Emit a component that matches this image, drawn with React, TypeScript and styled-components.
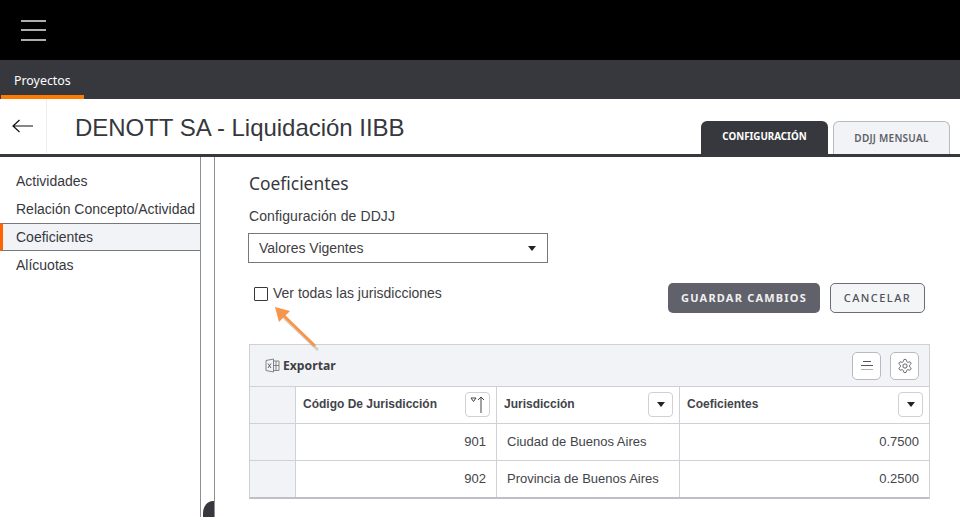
import React from "react";
import styled, { createGlobalStyle } from "styled-components";

const Global = createGlobalStyle`
  html, body { margin: 0; padding: 0; background: #fff; }
  body { font-family: "Liberation Sans", Arial, sans-serif; color: #36383d; }
  * { box-sizing: border-box; }
`;
const Page = styled.div`
  position: relative; width: 960px; height: 517px; overflow: hidden; display: flex; flex-direction: column;
`;
const TopBar = styled.header`
  height: 60px; background: #000; display: flex; align-items: center; padding-left: 21px; flex: none;
`;
const Burger = styled.button`
  width: 25px; height: 21px; padding: 0; border: 0; background: transparent; display: flex; flex-direction: column; justify-content: space-between;
  span { display: block; height: 2px; background: #aeaeae; }
`;
const Nav = styled.nav`
  height: 39px; background: #36383d; display: flex; padding-left: 1px; flex: none;
`;
const NavTab = styled.div`
  width: 83px; padding: 13px 0 0 13px; border-bottom: 4px solid #ff7a00; color: #fff; font: 12.4px/16px "Noto Sans", sans-serif;
`;
const TitleBar = styled.div`
  height: 58px; flex: none; display: flex; align-items: stretch; border-bottom: 3px solid #36383d; position: relative; padding-right: 10px;
`;
const BackCell = styled.div`
  width: 47px; height: 54px; display: flex; align-items: center; padding-left: 12px; border-right: 1px solid #eeeeee; flex: none;
`;
const Title = styled.h1`
  margin: 14px 0 0 28px; font: 400 24px/30px "Liberation Sans", sans-serif; letter-spacing: -0.03px; color: #36383d; flex: 1;
`;
const Tabs = styled.div`
  display: flex; gap: 5px; align-items: flex-end; height: 55px;
`;
const Tab = styled.div<{ $active?: boolean }>`
  height: 33px; display: flex; align-items: center; justify-content: center; padding-bottom: 1px;
  width: ${p => (p.$active ? "127px" : "117px")};
  border-radius: 6px 6px 0 0;
  font-family: "Noto Sans", sans-serif;
  font-weight: ${p => (p.$active ? 700 : 600)};
  font-size: ${p => (p.$active ? "9.8px" : "10px")};
  letter-spacing: ${p => (p.$active ? "0" : "0.25px")};
  line-height: 12px;
  background: ${p => (p.$active ? "#36383d" : "#f2f3f6")};
  color: ${p => (p.$active ? "#fff" : "#5f6068")};
  border: ${p => (p.$active ? "0" : "1px solid #b9bac0")};
  border-bottom: 0;
`;
const Body = styled.div`
  flex: 1; display: flex; min-height: 0;
`;
const Side = styled.aside`
  width: 201px; flex: none; border-right: 1px solid #8e8e96; padding-top: 11px; font-size: 14px;
`;
const SideItem = styled.div<{ $active?: boolean }>`
  height: 28px; line-height: 26px; padding-left: ${p => (p.$active ? "13px" : "16px")};
  color: #36383d; white-space: nowrap;
  ${p => p.$active && `background:#f2f3f6; border-top:1px solid #77787e; border-bottom:1px solid #77787e; border-left:3px solid #ff6200; margin-top:-1px; margin-bottom:1px;`}
`;
const Gutter = styled.div`
  width: 14px; flex: none; border-right: 1px solid #8e8e96; position: relative;
`;
const Blob = styled.div`
  position: absolute; right: 0; bottom: 0; width: 11px; height: 16px; background: #36383d; border-top-left-radius: 10px 12px;
`;
const Main = styled.main`
  flex: 1; padding: 16px 30px 0 34px; min-width: 0;
`;
const Heading = styled.h2`
  margin: 0; font: 400 17.4px/21px "Noto Sans", sans-serif; color: #36383d;
`;
const FieldLabel = styled.div`
  margin-top: 13px; font-size: 14px; line-height: 18px; letter-spacing: 0.1px; color: #3c3d42;
`;
const Select = styled.div`
  margin-top: 8px; width: 300px; height: 30px; margin-left: -1px; border: 1px solid #77787e; display: flex; align-items: center; justify-content: space-between; padding: 0 11px 0 10px;
  font-size: 14px; color: #3f4045;
`;
const Caret = styled.span`
  display: block; width: 0; height: 0; border-left: 4px solid transparent; border-right: 4px solid transparent; border-top: 5px solid #222;
`;
const ActionRow = styled.div`
  display: flex; justify-content: space-between; align-items: flex-start; margin-top: 20px; height: 30px;
`;
const CheckLabel = styled.label`
  display: flex; align-items: center; gap: 5px; font-size: 14px; line-height: 18px; padding-left: 5px; margin-top: 1px; color: #3f4045;
`;
const Box = styled.span`
  width: 14px; height: 14px; border: 1px solid #36383d; border-radius: 1px; background: #fff; display: block; margin-top: 1px;
`;
const Buttons = styled.div`
  display: flex; gap: 10px; margin-right: 5px;
`;
const Btn = styled.button<{ $primary?: boolean }>`
  height: 30px; border-radius: 5px; font-family: "Noto Sans", sans-serif; font-size: 11px; padding: 0 0 2px;
  letter-spacing: ${p => (p.$primary ? "1.2px" : "1.45px")};
  width: ${p => (p.$primary ? "152px" : "95px")};
  background: ${p => (p.$primary ? "#60616a" : "#f4f5f7")};
  color: ${p => (p.$primary ? "#f0f0f0" : "#50515a")};
  border: ${p => (p.$primary ? "0" : "1px solid #6b6c74")};
  font-weight: ${p => (p.$primary ? 700 : 500)};
`;
const Grid = styled.section`
  margin-top: 31px; width: 681px; border: 1px solid #d0d1d6; border-bottom: 2px solid #bfc0c5;
`;
const Toolbar = styled.div`
  height: 42px; background: #f2f3f6; display: flex; align-items: center; padding: 0 10px 0 15px; border-bottom: 1px solid #d0d1d6;
`;
const Export = styled.div`
  display: flex; align-items: center; gap: 3px; font: 700 12.2px/16px "Noto Sans", sans-serif; color: #3f4045; flex: 1;
`;
const ToolBtn = styled.button`
  width: 29px; height: 28px; margin-left: 9px; padding: 0; border: 1px solid #b9bac0; border-radius: 5px; background: #fff; display: flex; align-items: center; justify-content: center;
`;
const Row = styled.div<{ $head?: boolean }>`
  display: grid; grid-template-columns: 45px 201px 183px 1fr;
  height: ${p => (p.$head ? "36px" : "37px")};
  & + & { border-top: 1px solid #d0d1d6; }
`;
const Cell = styled.div<{ $right?: boolean; $head?: boolean; $stub?: boolean }>`
  display: flex; align-items: center; border-left: 1px solid #d0d1d6;
  &:first-child { border-left: 0; }
  justify-content: ${p => (p.$right ? "flex-end" : p.$head ? "space-between" : "flex-start")};
  padding: ${p => (p.$head ? "0 6px 2px 7px" : p.$right ? "0 10px 1px 0" : "0 0 1px 10px")};
  font-size: ${p => (p.$head ? "12px" : "13px")}; color: #43444a;
  font-weight: ${p => (p.$head ? 700 : 400)};
  ${p => p.$stub && "background:#f2f3f6;"}
`;
const HeadBtn = styled.span`
  width: 25px; height: 25px; border: 1px solid #cfd0d5; border-radius: 4px; background: #fff; display: flex; align-items: center; justify-content: center; flex: none;
`;
const ArrowOverlay = styled.svg`
  position: absolute; left: 265px; top: 295px; pointer-events: none;
`;

const Filter = () => <HeadBtn><Caret /></HeadBtn>;

export default function App() {
  return (
    <Page>
      <Global />
      <TopBar>
        <Burger aria-label="Menú"><span /><span /><span /></Burger>
      </TopBar>
      <Nav><NavTab>Proyectos</NavTab></Nav>
      <TitleBar>
        <BackCell>
          <svg width="21" height="14" viewBox="0 0 21 14" fill="none" stroke="#111" strokeWidth="1.2">
            <path d="M1 7h20M7.5 1 1 7l6.5 6" />
          </svg>
        </BackCell>
        <Title>DENOTT SA - Liquidación IIBB</Title>
        <Tabs>
          <Tab $active>CONFIGURACIÓN</Tab>
          <Tab>DDJJ MENSUAL</Tab>
        </Tabs>
      </TitleBar>
      <Body>
        <Side>
          <SideItem>Actividades</SideItem>
          <SideItem>Relación Concepto/Actividad</SideItem>
          <SideItem $active>Coeficientes</SideItem>
          <SideItem>Alícuotas</SideItem>
        </Side>
        <Gutter><Blob /></Gutter>
        <Main>
          <Heading>Coeficientes</Heading>
          <FieldLabel>Configuración de DDJJ</FieldLabel>
          <Select>Valores Vigentes<Caret /></Select>
          <ActionRow>
            <CheckLabel><Box />Ver todas las jurisdicciones</CheckLabel>
            <Buttons>
              <Btn $primary>GUARDAR CAMBIOS</Btn>
              <Btn>CANCELAR</Btn>
            </Buttons>
          </ActionRow>
          <Grid>
            <Toolbar>
              <Export>
                <svg width="15" height="15" viewBox="0 0 15 15" fill="none" stroke="#77787e" strokeWidth="0.9">
                  <path d="M1 2.5 8.5 1v13L1 12.5z" />
                  <path d="M8.5 3H14v9.5H8.5M11 3v9.5M8.5 7.5H14" />
                  <path d="M3 5.5l3 4.5M6 5.5l-3 4.5" stroke="#555" />
                </svg>
                Exportar
              </Export>
              <ToolBtn aria-label="Columnas">
                <svg width="14" height="10" viewBox="0 0 14 10" fill="none" strokeWidth="1">
                  <path d="M3 .5h8M1 4.5h12" stroke="#55565c" />
                  <path d="M1 8.5h12" stroke="#b0b1b6" />
                </svg>
              </ToolBtn>
              <ToolBtn aria-label="Ajustes">
                <svg width="16" height="16" viewBox="0 0 24 24" fill="none" stroke="#55565c" strokeWidth="1.4">
                  <circle cx="12" cy="12" r="3.2" />
                  <path d="M12.2 2h-.4a2 2 0 0 0-2 2v.2a2 2 0 0 1-1 1.7l-.4.3a2 2 0 0 1-2 0l-.2-.1a2 2 0 0 0-2.7.7l-.2.4a2 2 0 0 0 .7 2.7l.2.1a2 2 0 0 1 1 1.7v.6a2 2 0 0 1-1 1.7l-.2.1a2 2 0 0 0-.7 2.7l.2.4a2 2 0 0 0 2.7.7l.2-.1a2 2 0 0 1 2 0l.4.3a2 2 0 0 1 1 1.7v.2a2 2 0 0 0 2 2h.4a2 2 0 0 0 2-2v-.2a2 2 0 0 1 1-1.7l.4-.3a2 2 0 0 1 2 0l.2.1a2 2 0 0 0 2.7-.7l.2-.4a2 2 0 0 0-.7-2.7l-.2-.1a2 2 0 0 1-1-1.7v-.6a2 2 0 0 1 1-1.7l.2-.1a2 2 0 0 0 .7-2.7l-.2-.4a2 2 0 0 0-2.7-.7l-.2.1a2 2 0 0 1-2 0l-.4-.3a2 2 0 0 1-1-1.7V4a2 2 0 0 0-2-2z" />
                </svg>
              </ToolBtn>
            </Toolbar>
            <Row $head>
              <Cell $stub />
              <Cell $head>Código De Jurisdicción
                <HeadBtn>
                  <svg width="18" height="19" viewBox="0 0 18 19" fill="none" stroke="#444" strokeWidth="1">
                    <path d="M2 3h5L4.5 6.5z" />
                    <path d="M12 18V2M9 5l3-3 3 3" />
                  </svg>
                </HeadBtn>
              </Cell>
              <Cell $head>Jurisdicción<Filter /></Cell>
              <Cell $head>Coeficientes<Filter /></Cell>
            </Row>
            <Row>
              <Cell $stub />
              <Cell $right>901</Cell>
              <Cell>Ciudad de Buenos Aires</Cell>
              <Cell $right>0.7500</Cell>
            </Row>
            <Row>
              <Cell $stub />
              <Cell $right>902</Cell>
              <Cell>Provincia de Buenos Aires</Cell>
              <Cell $right>0.2500</Cell>
            </Row>
          </Grid>
        </Main>
      </Body>
      <ArrowOverlay width="60" height="60" viewBox="0 0 60 60" fill="none" aria-hidden="true">
        <path d="M52 53 18 21" stroke="#a9a49d" strokeWidth="3" opacity="0.45" transform="translate(1 2)" />
        <path d="M50 51 18 20" stroke="#f7954a" strokeWidth="3" />
        <path d="M10 12 25 16 14 27z" fill="#f7954a" />
      </ArrowOverlay>
    </Page>
  );
}
